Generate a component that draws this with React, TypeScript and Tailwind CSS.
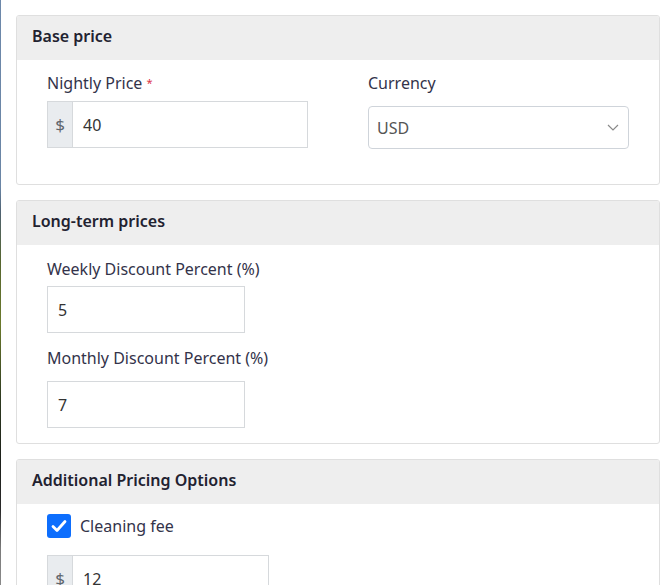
import React from "react";

const font = { fontFamily: '"Noto Sans", "DejaVu Sans", sans-serif' };

function Card({ title, children }: { title: string; children: React.ReactNode }) {
  return (
    <div className="w-[644px] border border-[#dfdfdf] rounded-[3px] bg-white overflow-hidden">
      <div className="h-[44px] bg-[#eeeeee] px-[15px] pb-[5px] flex items-center text-[16px] font-semibold text-[#222230]">
        {title}
      </div>
      {children}
    </div>
  );
}

function Label({ children, className = "" }: { children: React.ReactNode; className?: string }) {
  return (
    <div className={"text-[16px] leading-[22px] text-[#33334a] " + className}>{children}</div>
  );
}

function PrefixInput({ value, width, className = "" }: { value: string; width: string; className?: string }) {
  return (
    <div className={"flex h-[47px] " + width + " " + className}>
      <div className="w-[26px] shrink-0 bg-[#e9ecef] border border-[#d6d9dc] flex items-center justify-center text-[17px] text-[#5f666d]">
        $
      </div>
      <div className="flex-1 border border-l-0 border-[#d6d9dc] flex items-center pl-[10px] text-[16px] text-[#333]">
        {value}
      </div>
    </div>
  );
}

function PlainInput({ value, className = "" }: { value: string; className?: string }) {
  return (
    <div className={"w-[198px] h-[47px] border border-[#d6d9dc] flex items-center pl-[10px] text-[16px] text-[#333] " + className}>
      {value}
    </div>
  );
}

export default function App() {
  return (
    <div className="min-h-screen bg-white flex" style={font}>
      <div className="w-px shrink-0 self-stretch bg-[linear-gradient(180deg,#6d88aa_0%,#6a85a5_30%,#4f6272_34%,#56652f_42%,#6b7a2c_52%,#2e3a20_64%,#1c1f1a_74%,#2a2a2a_82%,#7a7a7a_88%,#9a9a9a_100%)]" />
      <div className="pl-[15px] pt-[15px] flex flex-col gap-[15px]">
        <Card title="Base price">
          <div className="pt-[12px] pb-[35px] px-[30px] grid grid-cols-2 gap-x-[60px]">
            <div>
              <Label className="mb-[7px]">
                Nightly Price <span className="text-[#dc3545] text-[11px] align-top">*</span>
              </Label>
              <PrefixInput value="40" width="w-[261px]" />
            </div>
            <div>
              <Label className="mb-[12px]">Currency</Label>
              <div className="h-[43px] border border-[#cfd4da] rounded-[4px] flex items-center justify-between pl-[8px] pr-[9px] text-[16px] text-[#555]">
                <span>USD</span>
                <svg width="12" height="7" viewBox="0 0 12 7" fill="none">
                  <path d="M1 1l5 5 5-5" stroke="#8a8a8a" strokeWidth="1.2" />
                </svg>
              </div>
            </div>
          </div>
        </Card>

        <Card title="Long-term prices">
          <div className="pt-[13px] pb-[15px] px-[30px]">
            <Label className="mb-[6px]">Weekly Discount Percent (%)</Label>
            <PlainInput value="5" />
            <Label className="mt-[14px] mb-[12px]">Monthly Discount Percent (%)</Label>
            <PlainInput value="7" />
          </div>
        </Card>

        <Card title="Additional Pricing Options">
          <div className="pt-[10px] pb-[20px] px-[30px]">
            <div className="flex items-center gap-[9px] h-[24px]">
              <div className="w-[24px] h-[24px] rounded-[3px] bg-[#0d6efd] flex items-center justify-center">
                <svg width="16" height="14" viewBox="0 0 16 14" fill="none">
                  <path d="M2 7.5l4 4L14 2.5" stroke="white" strokeWidth="2.8" strokeLinecap="round" strokeLinejoin="round" />
                </svg>
              </div>
              <Label>Cleaning fee</Label>
            </div>
            <PrefixInput value="12" width="w-[222px]" className="mt-[17px]" />
          </div>
        </Card>
      </div>
    </div>
  );
}
